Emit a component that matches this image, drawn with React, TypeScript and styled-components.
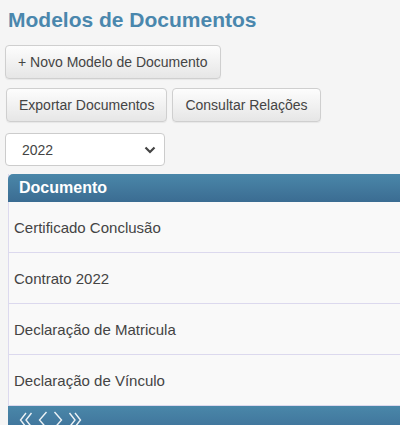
import React from "react";
import styled, { createGlobalStyle } from "styled-components";

const GlobalStyle = createGlobalStyle`
  html, body {
    margin: 0;
    padding: 0;
    background: #f5f5f5;
    overflow: hidden;
    font-family: "Liberation Sans", Arial, sans-serif;
  }
`;

const documentos = [
  "Certificado Conclusão",
  "Contrato 2022",
  "Declaração de Matricula",
  "Declaração de Vínculo",
];

const App: React.FC = () => {
  return (
    <>
      <GlobalStyle />
      <Page>
        <Title>Modelos de Documentos</Title>
        <Toolbar>
          <Button>+ Novo Modelo de Documento</Button>
        </Toolbar>
        <Toolbar>
          <Button>Exportar Documentos</Button>
          <Button>Consultar Relações</Button>
        </Toolbar>
        <SelectWrap>
          <YearSelect defaultValue="2022">
            <option value="2022">2022</option>
            <option value="2021">2021</option>
          </YearSelect>
          <Chevron width="12" height="8" viewBox="0 0 12 8">
            <polyline points="1.5,1.5 6,6 10.5,1.5" fill="none" stroke="#444" strokeWidth="2.2" />
          </Chevron>
        </SelectWrap>
        <Table>
          <Header>Documento</Header>
          {documentos.map((d) => (
            <Row key={d}>{d}</Row>
          ))}
          <Footer>
            <PagerIcon width="14" height="20" viewBox="0 0 14 20">
              <polyline points="7,4 1.5,11 7,18" />
              <polyline points="12.5,4 7,11 12.5,18" />
            </PagerIcon>
            <PagerIcon width="10" height="20" viewBox="0 0 10 20">
              <polyline points="8.5,3 1.5,11 8.5,19" />
            </PagerIcon>
            <PagerIcon width="10" height="20" viewBox="0 0 10 20">
              <polyline points="1.5,3 8.5,11 1.5,19" />
            </PagerIcon>
            <PagerIcon width="14" height="20" viewBox="0 0 14 20">
              <polyline points="1.5,4 7,11 1.5,18" />
              <polyline points="7,4 12.5,11 7,18" />
            </PagerIcon>
          </Footer>
        </Table>
      </Page>
    </>
  );
};

export default App;

const Page = styled.div`
  padding: 8px 0 0 5px;
  display: flex;
  flex-direction: column;
  align-items: flex-start;
`;

const Title = styled.h1`
  margin: 0 0 13px 3px;
  font-size: 21px;
  line-height: 24px;
  font-weight: bold;
  color: #4a87ad;
`;

const Toolbar = styled.div`
  display: flex;
  gap: 5px;
  margin-bottom: 9px;
  &:nth-of-type(2) { margin-left: 1px; margin-bottom: 11px; }
`;

const Button = styled.button`
  height: 34px;
  padding: 0 12px;
  font-family: "Liberation Sans", Arial, sans-serif;
  font-size: 14px;
  color: #444;
  background: linear-gradient(to bottom, #fdfdfd 0%, #e6e6e6 100%);
  border: 1px solid #cfcfcf;
  border-radius: 4px;
  box-shadow: 0 1px 1px rgba(0, 0, 0, 0.06);
  cursor: pointer;
`;

const SelectWrap = styled.div`
  position: relative;
  width: 160px;
  height: 33px;
  margin-bottom: 8px;
`;

const YearSelect = styled.select`
  appearance: none;
  width: 100%;
  height: 100%;
  padding: 0 0 0 16px;
  font-family: "Liberation Sans", Arial, sans-serif;
  font-size: 14px;
  color: #444;
  background: #fff;
  border: 1px solid #ccc;
  border-radius: 4px;
`;

const Chevron = styled.svg`
  position: absolute;
  right: 9px;
  top: 13px;
  pointer-events: none;
`;

const Table = styled.div`
  margin-left: 3px;
  align-self: stretch;
  display: flex;
  flex-direction: column;
  border-left: 1px solid #dcd9ee;
`;

const Header = styled.div`
  height: 28px;
  display: flex;
  align-items: center;
  padding-left: 11px;
  margin-left: -1px;
  font-size: 16px;
  font-weight: bold;
  color: #fff;
  border-top-left-radius: 5px;
  background: linear-gradient(to bottom, #4a87a9 0%, #3b6c92 100%);
`;

const Row = styled.div`
  height: 50px;
  display: flex;
  align-items: center;
  padding-left: 5px;
  font-size: 15px;
  color: #444;
  background: #f9f9f9;
  border-bottom: 1px solid #dcd9ee;
`;

const Footer = styled.div`
  height: 24px;
  display: flex;
  align-items: flex-start;
  gap: 5px;
  padding: 3px 0 0 11px;
  margin-left: -1px;
  background: linear-gradient(to bottom, #4a87a9 0%, #3d7098 100%);
`;

const PagerIcon = styled.svg`
  flex: none;
  fill: none;
  stroke: rgba(255, 255, 255, 0.9);
  stroke-width: 1.4;
`;
